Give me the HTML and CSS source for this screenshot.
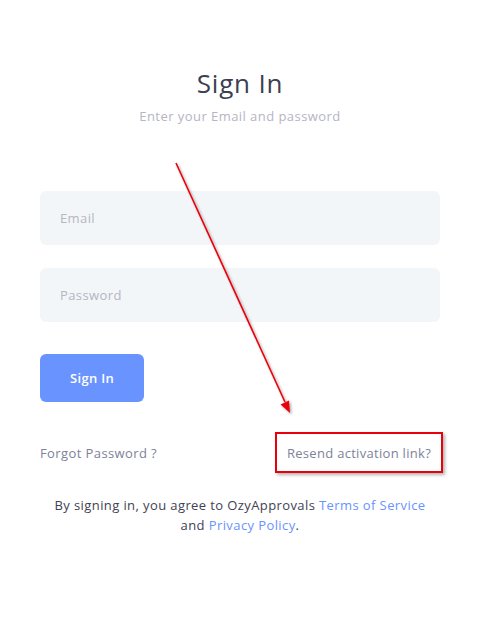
FILE: index.html
```html
<!DOCTYPE html>
<html>
<head>
<meta charset="utf-8">
<link rel="stylesheet" href="styles.css">
</head>
<body>
<div class="page">
  <form class="form">
    <div class="head">
      <h1 class="title">Sign In</h1>
      <p class="subtitle">Enter your Email and password</p>
    </div>
    <input class="field" type="text" placeholder="Email">
    <input class="field field-pw" type="password" placeholder="Password">
    <button class="btn" type="button">Sign In</button>
    <div class="links">
      <a class="link" href="#">Forgot Password ?</a>
      <a class="link resend" href="#">Resend activation link?</a>
    </div>
    <p class="terms">By signing in, you agree to OzyApprovals <a href="#">Terms of Service</a><br>and <a href="#">Privacy Policy</a>.</p>
  </form>
  <svg class="arrow" width="494" height="621" viewBox="0 0 494 621">
    <defs>
      <filter id="sh" x="-20%" y="-20%" width="140%" height="140%">
        <feDropShadow dx="1.5" dy="1.5" stdDeviation="1" flood-color="#000" flood-opacity="0.35"/>
      </filter>
    </defs>
    <g filter="url(#sh)">
      <line x1="176" y1="163" x2="285" y2="402" stroke="#e8000a" stroke-width="1.6"/>
      <polygon points="290,413 280.5,404.5 289,400.5" fill="#e8000a"/>
    </g>
  </svg>
</div>
</body>
</html>
```

FILE: styles.css
```css
* { box-sizing: border-box; }
html, body { margin: 0; padding: 0; background: #fff; }
body {
  font-family: "Open Sans", "Noto Sans", sans-serif;
  color: #3f4254;
  width: 494px;
  height: 621px;
  overflow: hidden;
}
.page { position: relative; width: 494px; height: 621px; }
.form {
  width: 400px;
  margin: 0 0 0 40px;
  padding-top: 65px;
  display: flex;
  flex-direction: column;
}
.head { text-align: center; margin-bottom: 66px; }
.title {
  margin: 0;
  font-size: 26px;
  font-weight: 400;
  color: #3b3f51;
  line-height: 36px;
  letter-spacing: 0.8px;
}
.subtitle {
  margin: 6px 0 0;
  font-size: 13px;
  line-height: 18px;
  color: #b5b5c3;
  letter-spacing: 0.45px;
}
.field {
  height: 54px;
  border: none;
  border-radius: 6px;
  background: #f3f6f9;
  padding: 0 20px;
  font-family: inherit;
  font-size: 13px;
  letter-spacing: 0.4px;
  color: #3f4254;
  outline: none;
}
.field::placeholder { color: #b5b5c3; }
.field-pw { margin-top: 23px; }
.btn {
  margin-top: 32px;
  width: 104px;
  height: 48px;
  border: none;
  border-radius: 6px;
  background: #6993ff;
  color: #fff;
  font-family: inherit;
  font-size: 13px;
  font-weight: 600;
  letter-spacing: 0.3px;
}
.links {
  margin-top: 30px;
  display: flex;
  justify-content: space-between;
  align-items: center;
}
.link {
  font-size: 13px;
  color: #7e8299;
  text-decoration: none;
  letter-spacing: 0.4px;
}
.resend {
  margin-right: -3px;
  height: 41px;
  width: 168px;
  display: flex;
  align-items: center;
  justify-content: center;
  border: 2px solid #e8000a;
  box-shadow: 2px 2px 3px rgba(0,0,0,0.3);
  letter-spacing: 0.3px;
}
.terms {
  margin: 22px 0 0;
  text-align: center;
  font-size: 13px;
  line-height: 20px;
  color: #3f4254;
  letter-spacing: 0.4px;
}
.terms a { color: #6993ff; text-decoration: none; }
.arrow { position: absolute; left: 0; top: 0; pointer-events: none; }
```
